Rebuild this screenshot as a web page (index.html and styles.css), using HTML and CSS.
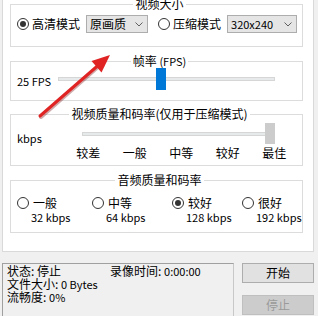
FILE: index.html
```html
<!DOCTYPE html>
<html lang="zh-CN">
<head>
  <meta charset="UTF-8">
  <meta name="viewport" content="width=device-width, initial-scale=1.0">
  <title>录像设置</title>
  <link rel="stylesheet" href="styles.css">
</head>
<body>

  <div id="settings">
    <fieldset class="group" id="sizeGroup">
      <legend>视频大小</legend>
      <div class="sizeRow">
        <span class="radio on"></span><span class="radioText">高清模式</span>
        <div class="combo" id="hdCombo">
          <span>原画质</span>
          <svg width="8" height="5" viewBox="0 0 8 5"><path d="M0.5 0.5 L4 4 L7.5 0.5" fill="none" stroke="#606060"/></svg>
        </div>
        <span class="radio" id="zipRadio"></span><span class="radioText">压缩模式</span>
        <div class="combo" id="sizeCombo">
          <span class="en">320x240</span>
          <svg width="8" height="5" viewBox="0 0 8 5"><path d="M0.5 0.5 L4 4 L7.5 0.5" fill="none" stroke="#606060"/></svg>
        </div>
      </div>
    </fieldset>

    <fieldset class="group" id="fpsGroup">
      <legend>帧率 <span class="en">(FPS)</span></legend>
      <div class="sliderRow">
        <span class="sliderLabel en" id="fpsLabel">25 FPS</span>
        <div class="slider" id="fpsSlider">
          <div class="track"></div>
          <div class="thumb" style="left: 98px;"></div>
        </div>
      </div>
    </fieldset>

    <fieldset class="group" id="videoGroup">
      <legend>视频质量和码率(仅用于压缩模式)</legend>
      <div class="sliderRow" id="videoRow">
        <span class="sliderLabel en" id="kbpsLabel">kbps</span>
        <div class="slider" id="videoSlider">
          <div class="track"></div>
          <div class="thumb disabled" style="left: 183px;"></div>
        </div>
      </div>
      <div class="ticks">
        <span>较差</span>
        <span>一般</span>
        <span>中等</span>
        <span>较好</span>
        <span>最佳</span>
      </div>
    </fieldset>

    <fieldset class="group" id="audioGroup">
      <legend>音频质量和码率</legend>
      <div class="audioOptions">
        <div class="option">
          <div class="optionTop"><span class="radio"></span><span>一般</span></div>
          <div class="rate en">32 kbps</div>
        </div>
        <div class="option">
          <div class="optionTop"><span class="radio"></span><span>中等</span></div>
          <div class="rate en">64 kbps</div>
        </div>
        <div class="option">
          <div class="optionTop"><span class="radio on"></span><span>较好</span></div>
          <div class="rate en">128 kbps</div>
        </div>
        <div class="option">
          <div class="optionTop"><span class="radio"></span><span>很好</span></div>
          <div class="rate en">192 kbps</div>
        </div>
      </div>
    </fieldset>
  </div>

  <div id="statusBar">
    <div id="statusBox">
      <div class="statusLine" id="firstLine">
        <span id="state">状态: 停止</span>
        <span id="recordTime">录像时间: <span class="en">0:00:00</span></span>
      </div>
      <div class="statusLine">文件大小: <span class="en">0 Bytes</span></div>
      <div class="statusLine">流畅度: <span class="en">0%</span></div>
    </div>
    <div id="buttons">
      <button id="startBtn">开始</button>
      <button id="stopBtn" disabled>停止</button>
    </div>
  </div>

  <svg id="arrow" width="318" height="316" viewBox="0 0 318 316">
    <line x1="41" y1="117" x2="99" y2="66" stroke="#7a1010" stroke-width="4" stroke-linecap="round" opacity="0.35"/>
    <line x1="40" y1="116" x2="98" y2="65.5" stroke="#e02424" stroke-width="3" stroke-linecap="round"/>
    <polygon points="110,55 101.5,72.5 91.5,61" fill="#e02424"/>
  </svg>

</body>
</html>
```

FILE: styles.css
```css
body {
  margin: 0;
  width: 318px;
  height: 316px;
  overflow: hidden;
  position: relative;
  background: #f0f0f0;
  color: #000;
  font-family: "Noto Sans CJK SC", sans-serif;
  font-size: 12px;
  line-height: 14px;
  white-space: nowrap;
}

.en {
  font-size: 11px;
}

#settings {
  box-sizing: border-box;
  width: 312px;
  height: 260px;
  margin: -8px 0 0 2px;
  padding: 4px 0 0 7px;
  border: 1px solid #d9d9d9;
  background: #fff;
}

.group {
  box-sizing: border-box;
  width: 293px;
  min-width: 0;
  margin: 0;
  padding: 0 0 0 6px;
  border: 1px solid #dcdcdc;
}

.group legend {
  margin: 0 auto;
  padding: 0 2px;
  line-height: 14px;
}

#sizeGroup {
  height: 50px;
}

#fpsGroup {
  height: 47px;
  margin-top: 7px;
}

#videoGroup {
  height: 59px;
  margin-top: 6px;
}

#audioGroup {
  height: 60px;
  margin-top: 7px;
}

/* radio buttons */
.radio {
  box-sizing: border-box;
  width: 12px;
  height: 12px;
  border: 1px solid #333;
  border-radius: 50%;
  display: inline-flex;
  align-items: center;
  justify-content: center;
  flex: none;
}

.radio.on::after {
  content: "";
  width: 6px;
  height: 6px;
  border-radius: 50%;
  background: #333;
}

/* video size row */
.sizeRow {
  display: flex;
  align-items: center;
  margin-top: 4px;
  height: 18px;
}

.sizeRow > * {
  flex: none;
}

.radioText {
  margin-left: 3px;
}

.combo {
  box-sizing: border-box;
  height: 18px;
  display: flex;
  align-items: center;
  justify-content: space-between;
  padding: 0 4px 0 3px;
  background: #e5e5e5;
  border: 1px solid #adadad;
  margin-left: 6px;
}

#hdCombo {
  width: 62px;
}

#zipRadio {
  margin-left: 10px;
}

#sizeCombo {
  width: 70px;
}

/* sliders */
.sliderRow {
  display: flex;
  align-items: center;
  height: 22px;
}

.sliderLabel {
  flex: none;
}

#fpsLabel {
  width: 41px;
  padding-top: 3px;
}

.slider {
  position: relative;
  flex: none;
  height: 22px;
  display: flex;
  align-items: center;
}

#fpsSlider {
  width: 217px;
}

.track {
  box-sizing: border-box;
  width: 100%;
  height: 4px;
  background: #e7eaea;
  border: 1px solid #d6d6d6;
}

.thumb {
  position: absolute;
  top: 0;
  width: 10px;
  height: 22px;
  background: #0078d7;
}

.thumb.disabled {
  background: #cccccc;
}

#videoRow {
  margin-top: 2px;
  height: 21px;
  align-items: flex-start;
}

#kbpsLabel {
  width: 65px;
  margin-top: 8px;
}

#videoSlider {
  width: 193px;
  height: 21px;
}

#videoSlider .thumb {
  height: 21px;
}

.ticks {
  display: grid;
  grid-template-columns: repeat(5, 46.5px);
  margin: 2px 0 0 48px;
  text-align: center;
}

/* audio options */
.audioOptions {
  display: grid;
  grid-template-columns: 75px 80px 70px 1fr;
  margin-top: 8px;
}

.optionTop {
  display: flex;
  align-items: center;
  gap: 4px;
  height: 15px;
}

.rate {
  padding-left: 14px;
  line-height: 15px;
}

/* status bar */
#statusBar {
  display: flex;
  gap: 8px;
  margin: 11px 0 0 2px;
}

#statusBox {
  box-sizing: border-box;
  width: 232px;
  height: 56px;
  padding: 0 4px;
  border: 1px solid #a0a0a0;
  border-right-color: #c8c8c8;
  border-bottom: none;
  background: #f0f0f0;
  line-height: 13px;
}

.statusLine {
  height: 13px;
}

#firstLine {
  display: flex;
  align-items: baseline;
  gap: 3px;
}

#state {
  width: 100px;
}

#buttons {
  display: flex;
  flex-direction: column;
  gap: 12px;
}

#buttons button {
  width: 72px;
  height: 20px;
  padding: 0;
  font: inherit;
  line-height: 18px;
  color: #000;
  background: #e1e1e1;
  border: 1px solid #adadad;
}

#buttons button:disabled {
  color: #9a9a9a;
  background: #cccccc;
  border-color: #bfbfbf;
}

#arrow {
  position: absolute;
  left: 0;
  top: 0;
  pointer-events: none;
}
```
